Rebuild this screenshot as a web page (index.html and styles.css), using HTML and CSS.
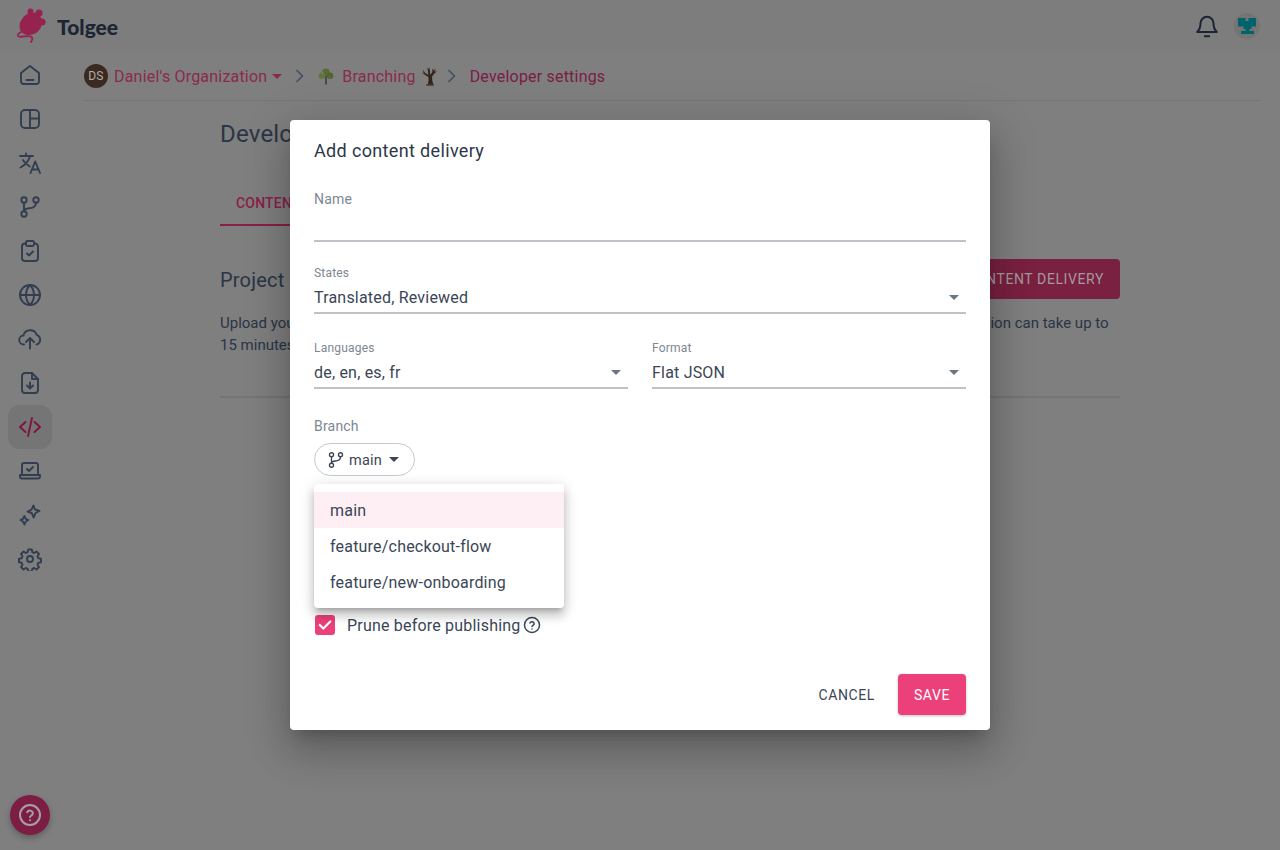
FILE: index.html
```html
<!DOCTYPE html>
<html lang="en">
<head>
    <meta charset="UTF-8">
    <meta name="viewport" content="width=device-width, initial-scale=1.0">
    <title>Tolgee - Developer settings</title>
    <link rel="stylesheet" href="styles.css">
</head>
<body>

    <header class="topBar">
        <div class="brand">
            <svg class="brandLogo" width="32" height="36" viewBox="0 0 32 36">
                <circle cx="14.500" cy="3.500" r="3" fill="#962250"/>
                <circle cx="23" cy="5" r="3.600" fill="#962250"/>
                <circle cx="26" cy="14" r="3.600" fill="#962250"/>
                <path fill="#962250" d="M14 5c5-1 10 .5 11 5 1 2 1.500 6 0 9-2 5-7 8-12 8-4 0-8-2-9-6-1-3-.5-7 2-10 2-3.500 5-5.500 8-6z"/>
                <path fill="none" stroke="#962250" stroke-width="1.800" stroke-linecap="round" d="M5 24c-2 1-3.500 2.500-3 4 .5 1.300 2.500 1 5 .5 3-.5 7-.8 8.500.5 1.200 1 .8 3-.5 5"/>
            </svg>
            <span class="brandName">Tolgee</span>
        </div>
        <div class="topActions">
            <svg class="bell" width="26" height="26" viewBox="0 0 24 24" fill="none" stroke="#1c2533" stroke-width="1.900" stroke-linecap="round" stroke-linejoin="round">
                <path d="M6 9.500a6 6 0 0 1 12 0c0 3.500 1 6 3 8H3c2-2 3-4.500 3-8z"/>
                <path d="M10 21.500h4"/>
            </svg>
            <div class="userAvatar">
                <svg width="18" height="16" viewBox="0 0 18 16">
                    <path fill="#00636c" d="M0 0h7.500v3h3V0H18v8.500h-4.500V11h-2v2H16v3H3v-3h4.500v-2h-2V8.500H0z"/>
                </svg>
            </div>
        </div>
    </header>

    <div class="layout">
        <nav class="sideMenu">
            <a class="menuItem">
                <svg class="icon" viewBox="0 0 24 24"><path d="M3 10 12 3l9 7v8.500a2.500 2.500 0 0 1-2.500 2.500h-13A2.500 2.500 0 0 1 3 18.500z"/><path d="M8.500 17h7"/></svg>
            </a>
            <a class="menuItem">
                <svg class="icon" viewBox="0 0 24 24"><rect x="3" y="3" width="18" height="18" rx="4"/><path d="M12 3v18M12 11.500h9"/></svg>
            </a>
            <a class="menuItem">
                <svg class="icon" viewBox="0 0 24 24"><path d="M2 5h13M8 2.500V5M12 5c-1.200 5-4.800 9-9.500 11.500M5 9c1.400 2.800 4 5 6.800 6.500"/><path d="m12.500 22 4.700-11.500L22 22M14 18.500h6.500"/></svg>
            </a>
            <a class="menuItem">
                <svg class="icon" viewBox="0 0 24 24"><circle cx="6" cy="5" r="2.700"/><circle cx="18" cy="5" r="2.700"/><circle cx="6" cy="19" r="2.700"/><path d="M6 7.700v8.600M18 7.700c0 4-3.500 5.300-6.500 5.600-3 .3-5.500 1-5.500 3"/></svg>
            </a>
            <a class="menuItem">
                <svg class="icon" viewBox="0 0 24 24"><path d="M8 4.500H7a3 3 0 0 0-3 3V19a3 3 0 0 0 3 3h10a3 3 0 0 0 3-3V7.500a3 3 0 0 0-3-3h-1"/><rect x="8" y="2" width="8" height="5" rx="1.500"/><path d="m9 14.500 2 2 4-4"/></svg>
            </a>
            <a class="menuItem">
                <svg class="icon" viewBox="0 0 24 24"><circle cx="12" cy="12" r="10"/><path d="M2 12h20M12 2c2.700 2.800 4 6.200 4 10s-1.300 7.200-4 10c-2.700-2.800-4-6.200-4-10s1.300-7.200 4-10z"/></svg>
            </a>
            <a class="menuItem">
                <svg class="icon" viewBox="0 0 24 24"><path d="M6 17.500a4.500 4.500 0 0 1-.6-9A7 7 0 0 1 18.800 8 5 5 0 0 1 18.500 17.500"/><path d="M12 21.500V11.500M8 15l4-4 4 4"/></svg>
            </a>
            <a class="menuItem">
                <svg class="icon" viewBox="0 0 24 24"><path d="M14 2H7a3 3 0 0 0-3 3v14a3 3 0 0 0 3 3h10a3 3 0 0 0 3-3V8z"/><path d="M14 2v6h6M12 11.500v6M9 14.500l3 3 3-3"/></svg>
            </a>
            <a class="menuItem menuItemActive">
                <svg class="icon" viewBox="0 0 24 24"><path d="m7.500 7-5.500 5 5.500 5M16.500 7l5.500 5-5.500 5M14 3l-4 18"/></svg>
            </a>
            <a class="menuItem">
                <svg class="icon" viewBox="0 0 24 24"><path d="M4 15V6a2 2 0 0 1 2-2h12a2 2 0 0 1 2 2v9"/><path d="M2 16h20v1.500a2 2 0 0 1-2 2H4a2 2 0 0 1-2-2zM9 10l2 2 4-4"/></svg>
            </a>
            <a class="menuItem">
                <svg class="icon" viewBox="0 0 24 24"><path d="m15.500 2.500 1.500 4 4.500 1.500-4 2-1.800 4.500-2-4.500L9.500 8.500l4-1.800zM6.500 13l1.200 2.800 2.800 1.200-2.800 1.500-1.200 3-1.500-3L2.500 17l2.500-1.200z"/></svg>
            </a>
            <a class="menuItem">
                <svg class="icon" viewBox="0 0 24 24"><circle cx="12" cy="12" r="3"/><path d="M10.200 2.500h3.600l.5 2.700 1.900.8 2.300-1.500 2.500 2.500-1.500 2.300.8 1.900 2.700.5v3.600l-2.700.5-.8 1.900 1.500 2.300-2.500 2.500-2.300-1.500-1.900.8-.5 2.700h-3.600l-.5-2.700-1.900-.8-2.300 1.500-2.500-2.500 1.500-2.300-.8-1.900-2.700-.5v-3.600l2.700-.5.8-1.900-1.500-2.300 2.500-2.500 2.300 1.500 1.900-.8z"/></svg>
            </a>
        </nav>

        <main class="mainArea">
            <div class="breadcrumbs">
                <span class="orgAvatar">DS</span>
                <span class="crumbLink">Daniel's Organization</span>
                <span class="crumbCaret"></span>
                <svg class="crumbChevron" width="20" height="20" viewBox="0 0 20 20"><path d="m7 4.500 5.500 5.500L7 15.500"/></svg>
                <svg class="crumbEmoji" width="16" height="17" viewBox="0 0 18 20">
                    <path fill="#3a3228" d="M8.200 9h1.600v10.500H8.200z"/>
                    <circle cx="9" cy="5" r="4.500" fill="#566b3a"/>
                    <circle cx="4.200" cy="9" r="3.800" fill="#5f7540"/>
                    <circle cx="13.800" cy="9" r="3.800" fill="#4f6534"/>
                    <circle cx="13.500" cy="11" r="1.100" fill="#9c5a2e"/>
                    <circle cx="5" cy="6" r="1" fill="#8a8a4a"/>
                </svg>
                <span class="crumbLink">Branching</span>
                <svg class="crumbBareTree" width="18" height="20" viewBox="0 0 20 24">
                    <path fill="#33241a" d="M7.500 22c.8-3 1-6 .5-9-2.200-.6-4.200-2-5.200-4L.5 9.500 2.200 8 1.500 4.500 4 8c1 1 2.500 2 4 2.500L7.500 5 6 2.500l2.200 1.300.6-3.300 1 4.500.4 5.500 2.800-3.200L12.500 3l2 2.500L17 3l-1.500 4 3.500-.5-3 1.500-3.500 4.500c0 3.500.3 7 1.700 9.500z"/>
                    <path fill="#33241a" d="M5.500 22h9v1.500h-9z"/>
                </svg>
                <svg class="crumbChevron" width="20" height="20" viewBox="0 0 20 20"><path d="m7 4.500 5.500 5.500L7 15.500"/></svg>
                <span class="crumbLink crumbCurrent">Developer settings</span>
            </div>

            <div class="pageContent">
                <h1 class="pageTitle">Developer settings</h1>
                <div class="tabs">
                    <div class="tab">CONTENT DELIVERY</div>
                </div>
                <div class="cdnHeader">
                    <h2 class="cdnTitle">Project CDN</h2>
                    <button type="button" class="addButton">ADD CONTENT DELIVERY</button>
                </div>
                <p class="cdnText">Upload your translations to the content delivery network and fetch them directly from your application. Each publication can take up to<br>15 minutes to propagate.</p>
                <div class="pageDivider"></div>
            </div>
        </main>
    </div>

    <a class="helpButton">
        <svg width="24" height="24" viewBox="0 0 24 24" fill="none" stroke="#a6a0a3" stroke-width="2" stroke-linecap="round"><circle cx="12" cy="12" r="10"/><path d="M9.200 9.300a3 3 0 0 1 5.700 1c0 2-2.900 2.600-2.900 3.700"/><path d="M12 17.200h.01"/></svg>
    </a>

    <div class="dialog">
        <h2 class="dialogTitle">Add content delivery</h2>

        <div class="field fieldName">
            <label class="nameLabel">Name</label>
        </div>

        <div class="field fieldStates">
            <label class="fieldLabel">States</label>
            <div class="fieldValue">Translated, Reviewed<span class="selectCaret"></span></div>
        </div>

        <div class="fieldRow">
            <div class="field">
                <label class="fieldLabel">Languages</label>
                <div class="fieldValue">de, en, es, fr<span class="selectCaret"></span></div>
            </div>
            <div class="field">
                <label class="fieldLabel">Format</label>
                <div class="fieldValue">Flat JSON<span class="selectCaret"></span></div>
            </div>
        </div>

        <div class="branchLabel">Branch</div>
        <button type="button" class="branchChip">
            <svg class="chipIcon" width="18" height="18" viewBox="0 0 24 24"><circle cx="6" cy="5" r="2.700"/><circle cx="18" cy="5" r="2.700"/><circle cx="6" cy="19" r="2.700"/><path d="M6 7.700v8.600M18 7.700c0 4-3.500 5.300-6.500 5.600-3 .3-5.500 1-5.500 3"/></svg>
            main
            <span class="chipCaret"></span>
        </button>

        <label class="pruneRow">
            <span class="checkBox">
                <svg width="16" height="16" viewBox="0 0 16 16" fill="none" stroke="#fff" stroke-width="2.200" stroke-linecap="round" stroke-linejoin="round"><path d="m2.800 8 3.500 3.500 7-7"/></svg>
            </span>
            Prune before publishing
            <svg class="pruneHelp" width="18" height="18" viewBox="0 0 24 24" fill="none" stroke="#3a4657" stroke-width="2" stroke-linecap="round"><circle cx="12" cy="12" r="10"/><path d="M9.200 9.300a3 3 0 0 1 5.700 1c0 2-2.900 2.600-2.900 3.700"/><path d="M12 17.200h.01"/></svg>
        </label>

        <div class="dialogActions">
            <button type="button" class="cancelButton">CANCEL</button>
            <button type="button" class="saveButton">SAVE</button>
        </div>
    </div>

    <ul class="branchMenu">
        <li class="branchOption branchOptionSelected">main</li>
        <li class="branchOption">feature/checkout-flow</li>
        <li class="branchOption">feature/new-onboarding</li>
    </ul>

</body>
</html>
```

FILE: styles.css
```css
* {
    box-sizing: border-box;
}

body {
    margin: 0;
    height: 850px;
    overflow: hidden;
    background-color: #7f7f7f;
    font-family: "Roboto", "Liberation Sans", sans-serif;
    letter-spacing: 0.2px;
    color: #3a4657;
}

.topBar {
    display: flex;
    justify-content: space-between;
    align-items: center;
    height: 52px;
    padding: 0 20px 0 16px;
    background-color: #7d7d7d;
}

.brand {
    display: flex;
    align-items: center;
    gap: 9px;
}

.brandName {
    font-family: "Lato", sans-serif;
    font-weight: 900;
    font-size: 21px;
    letter-spacing: 0;
    color: #1c2533;
}

.topActions {
    display: flex;
    align-items: center;
    gap: 14px;
}

.userAvatar {
    display: flex;
    align-items: center;
    justify-content: center;
    width: 26px;
    height: 26px;
    border-radius: 50%;
    background-color: #747474;
}

.layout {
    display: flex;
}

.sideMenu {
    display: flex;
    flex-direction: column;
    width: 60px;
    padding: 1px 8px;
}

.menuItem {
    display: flex;
    align-items: center;
    justify-content: center;
    width: 44px;
    height: 44px;
    border-radius: 12px;
}

.menuItemActive {
    background-color: #757575;
}

.icon {
    width: 24px;
    height: 24px;
    fill: none;
    stroke: #323e50;
    stroke-width: 1.900;
    stroke-linecap: round;
    stroke-linejoin: round;
}

.menuItemActive .icon {
    stroke: #7e1440;
}

.mainArea {
    flex: 1;
    padding-right: 20px;
}

.breadcrumbs {
    display: flex;
    align-items: center;
    height: 49px;
    margin-left: 24px;
    border-bottom: 1px solid #757575;
    font-size: 16px;
}

.orgAvatar {
    display: flex;
    align-items: center;
    justify-content: center;
    width: 24px;
    height: 24px;
    margin-right: 6px;
    border-radius: 50%;
    background-color: #3a2a22;
    color: #b5aca6;
    font-size: 12px;
}

.crumbLink {
    color: #8a2a4e;
}

.crumbCurrent {
    color: #7a1c44;
}

.crumbCaret {
    width: 0;
    height: 0;
    margin: 0 8px 0 5px;
    border-left: 5px solid transparent;
    border-right: 5px solid transparent;
    border-top: 5px solid #8a2a4e;
}

.crumbChevron {
    fill: none;
    stroke: #454f5e;
    stroke-width: 1.700;
    stroke-linecap: round;
    stroke-linejoin: round;
    margin-right: 8px;
}

.crumbEmoji {
    margin-right: 8px;
}

.crumbBareTree {
    margin: 0 3px 0 5px;
}

.pageContent {
    width: 900px;
    margin-left: 160px;
}

.pageTitle {
    margin: 18px 0 0;
    font-size: 24px;
    font-weight: 400;
    line-height: 30px;
    color: #2a3546;
}

.tabs {
    margin-top: 33px;
}

.tab {
    width: 200px;
    padding: 0 16px;
    height: 44px;
    line-height: 42px;
    font-size: 14px;
    font-weight: 500;
    color: #8a1f49;
    border-bottom: 2px solid #8a1f49;
}

.cdnHeader {
    display: flex;
    justify-content: space-between;
    align-items: center;
    margin-top: 33px;
}

.cdnTitle {
    margin: 0;
    padding-top: 2px;
    font-size: 20px;
    font-weight: 400;
    color: #2a3546;
}

.addButton {
    height: 40px;
    padding: 0 16px;
    border: none;
    border-radius: 4px;
    background-color: #7a2040;
    color: #a39a9e;
    font-family: inherit;
    font-size: 14px;
    font-weight: 400;
    letter-spacing: 0.6px;
}

.cdnText {
    margin: 13px 0 0;
    font-size: 15px;
    line-height: 22px;
    letter-spacing: 0;
    color: #2a3546;
}

.pageDivider {
    margin-top: 40px;
    height: 2px;
    background-color: #747474;
}

.helpButton {
    position: fixed;
    left: 10px;
    bottom: 15px;
    display: flex;
    align-items: center;
    justify-content: center;
    width: 40px;
    height: 40px;
    border-radius: 50%;
    background-color: #7c1e44;
    box-shadow: 0 3px 6px rgba(0, 0, 0, 0.25);
}

.dialog {
    position: absolute;
    left: 290px;
    top: 120px;
    width: 700px;
    height: 610px;
    padding: 0 24px;
    border-radius: 4px;
    background-color: #fff;
    box-shadow: 0 11px 15px -7px rgba(0, 0, 0, 0.2), 0 24px 38px 3px rgba(0, 0, 0, 0.14), 0 9px 46px 8px rgba(0, 0, 0, 0.12);
}

.dialogTitle {
    margin: 0;
    padding-top: 19px;
    font-size: 18px;
    font-weight: 400;
    line-height: 24px;
    letter-spacing: 0.35px;
    color: #2c3849;
}

.field {
    flex: 1;
    border-bottom: 2px solid #bfc3c9;
}

.fieldName {
    height: 61px;
    margin-top: 18px;
}

.nameLabel {
    display: block;
    padding-top: 10px;
    font-size: 14px;
    color: #7d8793;
}

.fieldStates {
    margin-top: 23px;
}

.fieldLabel {
    display: block;
    padding-top: 1px;
    font-size: 12px;
    line-height: 15px;
    color: #7d8793;
}

.fieldValue {
    display: flex;
    justify-content: space-between;
    align-items: center;
    height: 29px;
    margin-top: 2px;
    padding-right: 7px;
    font-size: 16px;
    color: #3a4657;
}

.selectCaret {
    width: 0;
    height: 0;
    border-left: 5px solid transparent;
    border-right: 5px solid transparent;
    border-top: 5px solid #6b7583;
}

.fieldRow {
    display: flex;
    gap: 24px;
    margin-top: 26px;
}

.branchLabel {
    margin-top: 27px;
    font-size: 14px;
    line-height: 20px;
    color: #7d8793;
}

.branchChip {
    display: flex;
    align-items: center;
    height: 33px;
    margin-top: 7px;
    padding: 2px 15px 0 12px;
    border: 1px solid #c5c9ce;
    border-radius: 17px;
    background-color: #fff;
    font-family: inherit;
    font-size: 14.500px;
    letter-spacing: 0.2px;
    color: #3a4657;
}

.chipIcon {
    margin: -2px 4px 0 0;
    fill: none;
    stroke: #3a4657;
    stroke-width: 1.800;
}

.chipCaret {
    width: 0;
    height: 0;
    margin: -2px 0 0 7px;
    border-left: 5px solid transparent;
    border-right: 5px solid transparent;
    border-top: 5px solid #3a4657;
}

.pruneRow {
    display: flex;
    align-items: center;
    margin-top: 139px;
    height: 20px;
    padding-left: 1px;
    font-size: 16px;
    color: #3a4657;
}

.checkBox {
    display: flex;
    align-items: center;
    justify-content: center;
    width: 20px;
    height: 20px;
    margin-right: 12px;
    border-radius: 3px;
    background-color: #ec407a;
}

.pruneHelp {
    margin-left: 3px;
}

.dialogActions {
    display: flex;
    justify-content: flex-end;
    align-items: center;
    gap: 8px;
    margin-top: 39px;
}

.cancelButton {
    height: 41px;
    padding: 0 15px;
    border: none;
    background: none;
    font-family: inherit;
    font-size: 14px;
    font-weight: 400;
    letter-spacing: 0.6px;
    color: #3a4657;
}

.saveButton {
    width: 68px;
    height: 41px;
    border: none;
    border-radius: 4px;
    background-color: #ec407a;
    color: #fff;
    font-family: inherit;
    font-size: 14px;
    font-weight: 400;
    letter-spacing: 0.6px;
    box-shadow: 0 1px 3px rgba(0, 0, 0, 0.25);
}

.branchMenu {
    position: absolute;
    left: 314px;
    top: 484px;
    width: 250px;
    margin: 0;
    padding: 8px 0;
    list-style: none;
    border-radius: 4px;
    background-color: #fff;
    box-shadow: 0 5px 5px -3px rgba(0, 0, 0, 0.2), 0 8px 10px 1px rgba(0, 0, 0, 0.14), 0 3px 14px 2px rgba(0, 0, 0, 0.12);
}

.branchOption {
    height: 36px;
    padding: 0 16px;
    line-height: 38px;
    font-size: 16px;
    color: #3a4657;
}

.branchOptionSelected {
    background-color: #fdeff4;
}
```
